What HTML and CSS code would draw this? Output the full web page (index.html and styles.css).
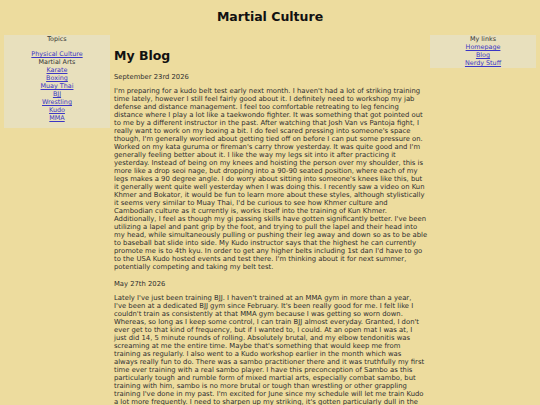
FILE: index.html
```html
<!DOCTYPE html>
<html>
<head>
<meta charset="utf-8">
<title>Martial Culture</title>
<link rel="stylesheet" href="styles.css">
</head>
<body>
<h1 class="site-title">Martial Culture</h1>
<div class="layout">
  <nav class="sidebar topics">
    <div class="box-title">Topics</div>
    <ul class="link-list spaced">
      <li><a href="#">Physical Culture</a></li>
      <li class="plain">Martial Arts</li>
      <li><a href="#">Karate</a></li>
      <li><a href="#">Boxing</a></li>
      <li><a href="#">Muay Thai</a></li>
      <li><a href="#">BJJ</a></li>
      <li><a href="#">Wrestling</a></li>
      <li><a href="#">Kudo</a></li>
      <li><a href="#">MMA</a></li>
    </ul>
  </nav>
  <main class="content">
    <h2 class="blog-title">My Blog</h2>
    <p class="date">September 23rd 2026</p>
    <p class="post">I'm preparing for a kudo belt test early next month. I haven't had a lot of striking training<br>
time lately, however I still feel fairly good about it. I definitely need to workshop my jab<br>
defense and distance management. I feel too comfortable retreating to leg fencing<br>
distance where I play a lot like a taekwondo fighter. It was something that got pointed out<br>
to me by a different instructor in the past. After watching that Josh Van vs Pantoja fight, I<br>
really want to work on my boxing a bit. I do feel scared pressing into someone's space<br>
though, I'm generally worried about getting tied off on before I can put some pressure on.<br>
Worked on my kata guruma or fireman's carry throw yesterday. It was quite good and I'm<br>
generally feeling better about it. I like the way my legs sit into it after practicing it<br>
yesterday. Instead of being on my knees and hoisting the person over my shoulder, this is<br>
more like a drop seoi nage, but dropping into a 90-90 seated position, where each of my<br>
legs makes a 90 degree angle. I do worry about sitting into someone's knees like this, but<br>
it generally went quite well yesterday when I was doing this. I recently saw a video on Kun<br>
Khmer and Bokator, it would be fun to learn more about these styles, although stylistically<br>
it seems very similar to Muay Thai, I'd be curious to see how Khmer culture and<br>
Cambodian culture as it currently is, works itself into the training of Kun Khmer.<br>
Additionally, I feel as though my gi passing skills have gotten significantly better. I've been<br>
utilizing a lapel and pant grip by the foot, and trying to pull the lapel and their head into<br>
my head, while simultaneously pulling or pushing their leg away and down so as to be able<br>
to baseball bat slide into side. My Kudo instructor says that the highest he can currently<br>
promote me is to 4th kyu. In order to get any higher belts including 1st dan I'd have to go<br>
to the USA Kudo hosted events and test there. I'm thinking about it for next summer,<br>
potentially competing and taking my belt test.</p>
    <p class="date">May 27th 2026</p>
    <p class="post">Lately I've just been training BJJ. I haven't trained at an MMA gym in more than a year,<br>
I've been at a dedicated BJJ gym since February. It's been really good for me. I felt like I<br>
couldn't train as consistently at that MMA gym because I was getting so worn down.<br>
Whereas, so long as I keep some control, I can train BJJ almost everyday. Granted, I don't<br>
ever get to that kind of frequency, but if I wanted to, I could. At an open mat I was at, I<br>
just did 14, 5 minute rounds of rolling. Absolutely brutal, and my elbow tendonitis was<br>
screaming at me the entire time. Maybe that's something that would keep me from<br>
training as regularly. I also went to a Kudo workshop earlier in the month which was<br>
always really fun to do. There was a sambo practitioner there and it was truthfully my first<br>
time ever training with a real sambo player. I have this preconception of Sambo as this<br>
particularly tough and rumble form of mixed martial arts, especially combat sambo, but<br>
training with him, sambo is no more brutal or tough than wrestling or other grappling<br>
training I've done in my past. I'm excited for June since my schedule will let me train Kudo<br>
a lot more frequently. I need to sharpen up my striking, it's gotten particularly dull in the<br>
past few months, and I'd like to get back to a place where I feel comfortable standing.</p>
  </main>
  <nav class="sidebar mylinks">
    <div class="box-title">My links</div>
    <ul class="link-list">
      <li><a href="#">Homepage</a></li>
      <li><a href="#">Blog</a></li>
      <li><a href="#">Nerdy Stuff</a></li>
    </ul>
  </nav>
</div>
</body>
</html>
```

FILE: styles.css
```css
html, body {
  margin: 0;
  padding: 0;
}
body {
  background: #eddc9e;
  color: #2e2e2e;
  font-family: "DejaVu Sans", Verdana, sans-serif;
  font-size: 6.4px;
  line-height: 8px;
  padding: 0 4px;
}
.site-title {
  margin: 0;
  padding-top: 9px;
  height: 26px;
  box-sizing: border-box;
  text-align: center;
  font-size: 12.5px;
  line-height: 16px;
  color: #111;
}
.layout {
  display: grid;
  grid-template-columns: 106px 1fr 106px;
  gap: 4px;
  align-items: start;
  margin-top: 9px;
}
.sidebar {
  background: #e8e0bd;
  text-align: center;
  padding: 0 0 6px;
}
.mylinks {
  padding-bottom: 1px;
}
.box-title {
  color: #333;
}
.link-list {
  list-style: none;
  margin: 0;
  padding: 0;
}
.link-list.spaced {
  margin-top: 7px;
}
.link-list a {
  color: #3b36c4;
  text-decoration: underline;
}
.plain {
  color: #333;
}
.content {
  min-width: 0;
  font-size: 6.85px;
}
.blog-title {
  margin: 13px 0 0;
  font-size: 12.5px;
  line-height: 16px;
  color: #111;
}
.date {
  margin: 9px 0 6px;
  font-size: 6.8px;
}
.post {
  margin: 0 0 7px;
  white-space: nowrap;
}
```
